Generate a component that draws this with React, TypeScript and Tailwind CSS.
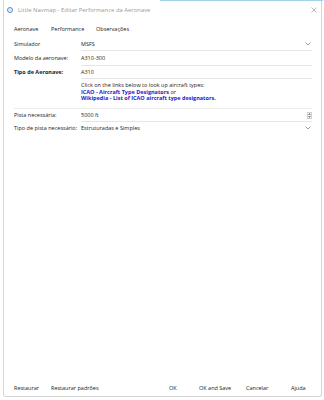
import React from "react";

const Chevron = () => (
  <svg width="6" height="4" viewBox="0 0 6 4" className="shrink-0">
    <path d="M0.5 0.5 L3 3 L5.5 0.5" fill="none" stroke="#888" strokeWidth="0.8" />
  </svg>
);

const Spin = () => (
  <div className="w-[5px] h-[7px] border border-[#d0d0d0] flex flex-col items-center justify-center gap-[1px] shrink-0">
    <svg width="3" height="2" viewBox="0 0 4 2"><path d="M0 2 L2 0 L4 2Z" fill="#555" /></svg>
    <svg width="3" height="2" viewBox="0 0 4 2"><path d="M0 0 L2 2 L4 0Z" fill="#555" /></svg>
  </div>
);

export default function App() {
  return (
    <div className="w-[324px] h-[400px] bg-white relative overflow-hidden text-[5.5px] text-[#222]" style={{ fontFamily: '"Open Sans", Arial, sans-serif' }}>
      <div className="absolute top-0 left-[160px] right-[1px] h-[1px] bg-[#9fd3ea]" />
      <div className="ml-[3px] w-[319px] h-[397px] border-l border-r border-b border-[#d6d6d6] rounded-b-[3px] flex flex-col">
        {/* title bar */}
        <div className="h-[20px] flex items-center pl-[3px] pr-[4px]">
          <div className="w-[6px] h-[6px] rounded-full border border-[#5a8fc4] bg-[#dfeefa] mr-[5px]" />
          <span className="text-[#9a9a9a] text-[5.9px]">Little Navmap - Editar Performance da Aeronave</span>
          <div className="flex-1" />
          <svg width="6" height="6" viewBox="0 0 6 6"><path d="M0.5 0.5 L5.5 5.5 M5.5 0.5 L0.5 5.5" stroke="#999" strokeWidth="0.7" /></svg>
        </div>
        {/* tabs */}
        <div className="h-[18px] flex items-center pl-[10px] pt-[1px]">
          <span className="w-[37px]">Aeronave</span>
          <span className="w-[45px]">Performance</span>
          <span>Observações</span>
        </div>
        {/* form */}
        <div className="flex flex-col pl-[10px] pr-[9px]">
          <div className="h-[13px] flex items-center">
            <span className="w-[67px]">Simulador</span>
            <div className="flex-1 h-full flex items-center border-b border-[#e6e6e6] pr-[1px]">
              <span className="flex-1">MSFS</span>
              <Chevron />
            </div>
          </div>
          <div className="h-[15px] flex items-center">
            <span className="w-[67px]">Modelo da aeronave:</span>
            <div className="flex-1 h-full flex items-center border-b border-[#e6e6e6]">
              <span>A310-300</span>
            </div>
          </div>
          <div className="h-[13px] flex items-center">
            <span className="w-[67px] font-bold">Tipo de Aeronave:</span>
            <div className="flex-1 h-full flex items-center border-b border-[#e6e6e6]">
              <span>A310</span>
            </div>
          </div>
          <div className="flex pt-[3px]">
            <span className="w-[67px]" />
            <div className="flex flex-col leading-[6.7px]">
              <span>Click on the links below to look up aircraft types:</span>
              <span><b className="text-[#1c1cc8]">ICAO - Aircraft Type Designators</b> or</span>
              <span><b className="text-[#1c1cc8]">Wikipedia - List of ICAO aircraft type designators.</b></span>
            </div>
          </div>
          <div className="h-[14px] flex items-center mt-[6px] border-t border-[#ececec]">
            <span className="w-[67px]">Pista necessária:</span>
            <div className="flex-1 h-full flex items-center border-b border-[#e6e6e6]">
              <span className="flex-1">5000 ft</span>
              <Spin />
            </div>
          </div>
          <div className="h-[12px] flex items-center">
            <span className="w-[67px]">Tipo de pista necessário:</span>
            <div className="flex-1 h-full flex items-center pr-[1px]">
              <span className="flex-1">Estruturadas e Simples</span>
              <Chevron />
            </div>
          </div>
        </div>
        <div className="flex-1" />
        {/* buttons */}
        <div className="h-[16px] flex items-center pl-[10px] mb-[0px]">
          <span className="w-[37px]">Restaurar</span>
          <span>Restaurar padrões</span>
          <div className="flex-1" />
          <span className="w-[30px]">OK</span>
          <span className="w-[47px]">OK and Save</span>
          <span className="w-[45px]">Cancelar</span>
          <span className="w-[30px]">Ajuda</span>
        </div>
      </div>
    </div>
  );
}
